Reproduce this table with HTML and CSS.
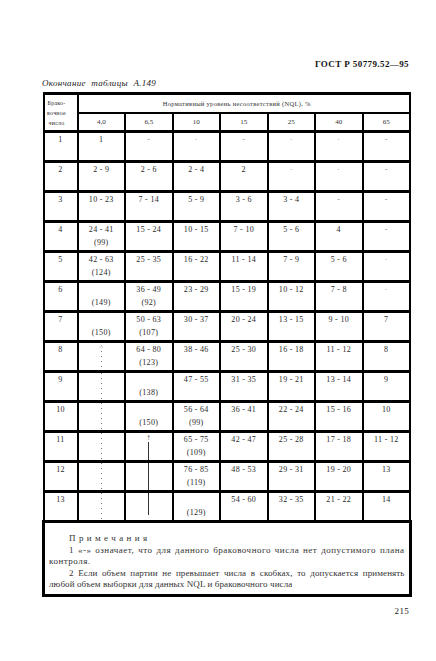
FILE: index.html
```html
<!DOCTYPE html>
<html lang="ru">
<head>
<meta charset="utf-8">
<title>ГОСТ Р 50779.52—95</title>
<link rel="stylesheet" href="styles.css">
</head>
<body>
<div class="page">
  <div class="doc-code">ГОСТ Р 50779.52—95</div>
  <div class="caption">Окончание таблицы А.149</div>
  <table class="grid">
    <colgroup>
      <col class="c-first">
      <col class="c-val"><col class="c-val"><col class="c-val"><col class="c-val"><col class="c-val"><col class="c-val"><col class="c-val">
    </colgroup>
    <thead>
      <tr class="h1">
        <th rowspan="2" class="th-first">Брако-<br>вочное<br>число</th>
        <th colspan="7" class="th-title">Нормативный уровень несоответствий (NQL), %</th>
      </tr>
      <tr class="h2">
        <th>4,0</th><th>6,5</th><th>10</th><th>15</th><th>25</th><th>40</th><th>65</th>
      </tr>
    </thead>
    <tbody>
      <tr><td class="num">1</td><td>1</td><td class="mark">-</td><td class="mark">·</td><td class="mark">-</td><td class="mark">·</td><td class="mark">·</td><td class="mark">-</td></tr>
      <tr><td class="num">2</td><td>2 - 9</td><td>2 - 6</td><td>2 - 4</td><td>2</td><td class="mark">·</td><td class="mark">·</td><td class="mark">-</td></tr>
      <tr><td class="num">3</td><td>10 - 23</td><td>7 - 14</td><td>5 - 9</td><td>3 - 6</td><td>3 - 4</td><td class="mark">-</td><td class="mark">-</td></tr>
      <tr><td class="num">4</td><td>24 - 41<br>(99)</td><td>15 - 24</td><td>10 - 15</td><td>7 - 10</td><td>5 - 6</td><td>4</td><td class="mark">-</td></tr>
      <tr><td class="num">5</td><td>42 - 63<br>(124)</td><td>25 - 35</td><td>16 - 22</td><td>11 - 14</td><td>7 - 9</td><td>5 - 6</td><td class="mark">·</td></tr>
      <tr><td class="num">6</td><td>&nbsp;<br>(149)</td><td>36 - 49<br>(92)</td><td>23 - 29</td><td>15 - 19</td><td>10 - 12</td><td>7 - 8</td><td class="mark">·</td></tr>
      <tr><td class="num">7</td><td>&nbsp;<br>(150)</td><td>50 - 63<br>(107)</td><td>30 - 37</td><td>20 - 24</td><td>13 - 15</td><td>9 - 10</td><td>7</td></tr>
      <tr><td class="num">8</td><td class="dots dots-start"><span class="dot-head">˄</span></td><td>64 - 80<br>(123)</td><td>38 - 46</td><td>25 - 30</td><td>16 - 18</td><td>11 - 12</td><td>8</td></tr>
      <tr><td class="num">9</td><td class="dots"></td><td>&nbsp;<br>(138)</td><td>47 - 55</td><td>31 - 35</td><td>19 - 21</td><td>13 - 14</td><td>9</td></tr>
      <tr><td class="num">10</td><td class="dots"></td><td>&nbsp;<br>(150)</td><td>56 - 64<br>(99)</td><td>36 - 41</td><td>22 - 24</td><td>15 - 16</td><td>10</td></tr>
      <tr><td class="num">11</td><td class="dots"></td><td class="rule rule-start"><span class="arrow">↑</span></td><td>65 - 75<br>(109)</td><td>42 - 47</td><td>25 - 28</td><td>17 - 18</td><td>11 - 12</td></tr>
      <tr><td class="num">12</td><td class="dots"></td><td class="rule"></td><td>76 - 85<br>(119)</td><td>48 - 53</td><td>29 - 31</td><td>19 - 20</td><td>13</td></tr>
      <tr><td class="num">13</td><td class="dots dots-end"></td><td class="rule rule-end"></td><td>&nbsp;<br>(129)</td><td>54 - 60</td><td>32 - 35</td><td>21 - 22</td><td>14</td></tr>
    </tbody>
    <tfoot>
      <tr class="notes-row">
        <td colspan="8" class="notes">
          <p class="notes-title">Примечания</p>
          <p class="note-one">1 «-» означает, что для данного браковочного числа нет допустимого плана контроля.</p>
          <p class="note-two">2 Если объем партии не превышает числа в скобках, то допускается применять любой объем выборки для данных NQL и браковочного числа</p>
        </td>
      </tr>
    </tfoot>
  </table>
  <div class="page-no">215</div>
</div>
</body>
</html>
```
FILE: styles.css
```css
body {
  margin: 0;
  background: #ffffff;
  font-family: "Liberation Serif", "Times New Roman", serif;
  color: #1e1e1e;
}

.page {
  width: 367px;
  margin-left: 42px;
  padding-top: 58px;
}

.doc-code {
  text-align: right;
  font-weight: bold;
  font-size: 9px;
  line-height: 12px;
  letter-spacing: 0.4px;
  color: #111;
}

.caption {
  margin-top: 7px;
  margin-bottom: 3px;
  font-style: italic;
  font-size: 9px;
  line-height: 12px;
  letter-spacing: 0.3px;
  word-spacing: 3px;
  color: #222;
}

.grid {
  border-collapse: collapse;
  table-layout: fixed;
  width: 367px;
}

.c-first { width: 34px; }
.c-val { width: 47.5px; }

.grid th,
.grid td {
  border: 2px solid #000;
  padding: 0;
  font-weight: normal;
  text-align: center;
}

.grid thead tr { height: 19px; }

.grid thead th {
  border-top-width: 3px;
  vertical-align: middle;
  color: #333;
}

.th-first {
  font-size: 6px;
  line-height: 10px;
  letter-spacing: 0.2px;
  padding-right: 8px !important;
  border-bottom-width: 3px !important;
}

.th-title {
  font-size: 6.5px;
  letter-spacing: 0.3px;
  padding-right: 14px !important;
}

.h2 th {
  font-size: 7px;
  border-top-width: 2px !important;
  border-bottom-width: 3px;
}

.grid tbody tr { height: 30px; }

.grid tbody td {
  vertical-align: top;
  font-size: 8px;
  line-height: 13px;
  letter-spacing: 0.3px;
  border-top-width: 3px;
  border-bottom-width: 3px;
  color: #2a2a2a;
}

.grid tbody td.mark { color: #888; }

.dots {
  background: repeating-linear-gradient(to bottom, #777 0 1px, transparent 1px 5px) center top / 1px 100% no-repeat;
}

.dots-start {
  background-position: center bottom;
  background-size: 1px calc(100% - 8px);
}

.dot-head {
  font-size: 7px;
  line-height: 8px;
  color: #777;
  display: block;
}

.rule {
  background: linear-gradient(#333, #333) center top / 1px 100% no-repeat;
}

.rule-start {
  background-position: center bottom;
  background-size: 1px calc(100% - 9px);
}

.rule-end {
  background-size: 1px calc(100% - 5px);
}

.arrow {
  display: block;
  font-size: 8px;
  line-height: 10px;
  color: #333;
}

.notes-row { height: 73px; }

.grid tfoot td.notes {
  border: 3px solid #000;
  vertical-align: top;
  text-align: justify;
  font-size: 9px;
  line-height: 11.6px;
  letter-spacing: 0.5px;
  padding: 10px 4px 3px 4px;
  color: #333;
}

.notes p {
  margin: 0;
  text-indent: 20px;
}

.notes .notes-title {
  letter-spacing: 3.4px;
}

.notes .note-two {
  letter-spacing: 0.1px;
}

.page-no {
  margin-top: 8px;
  text-align: right;
  font-size: 9px;
  line-height: 12px;
  letter-spacing: 0.3px;
  color: #222;
}
```
